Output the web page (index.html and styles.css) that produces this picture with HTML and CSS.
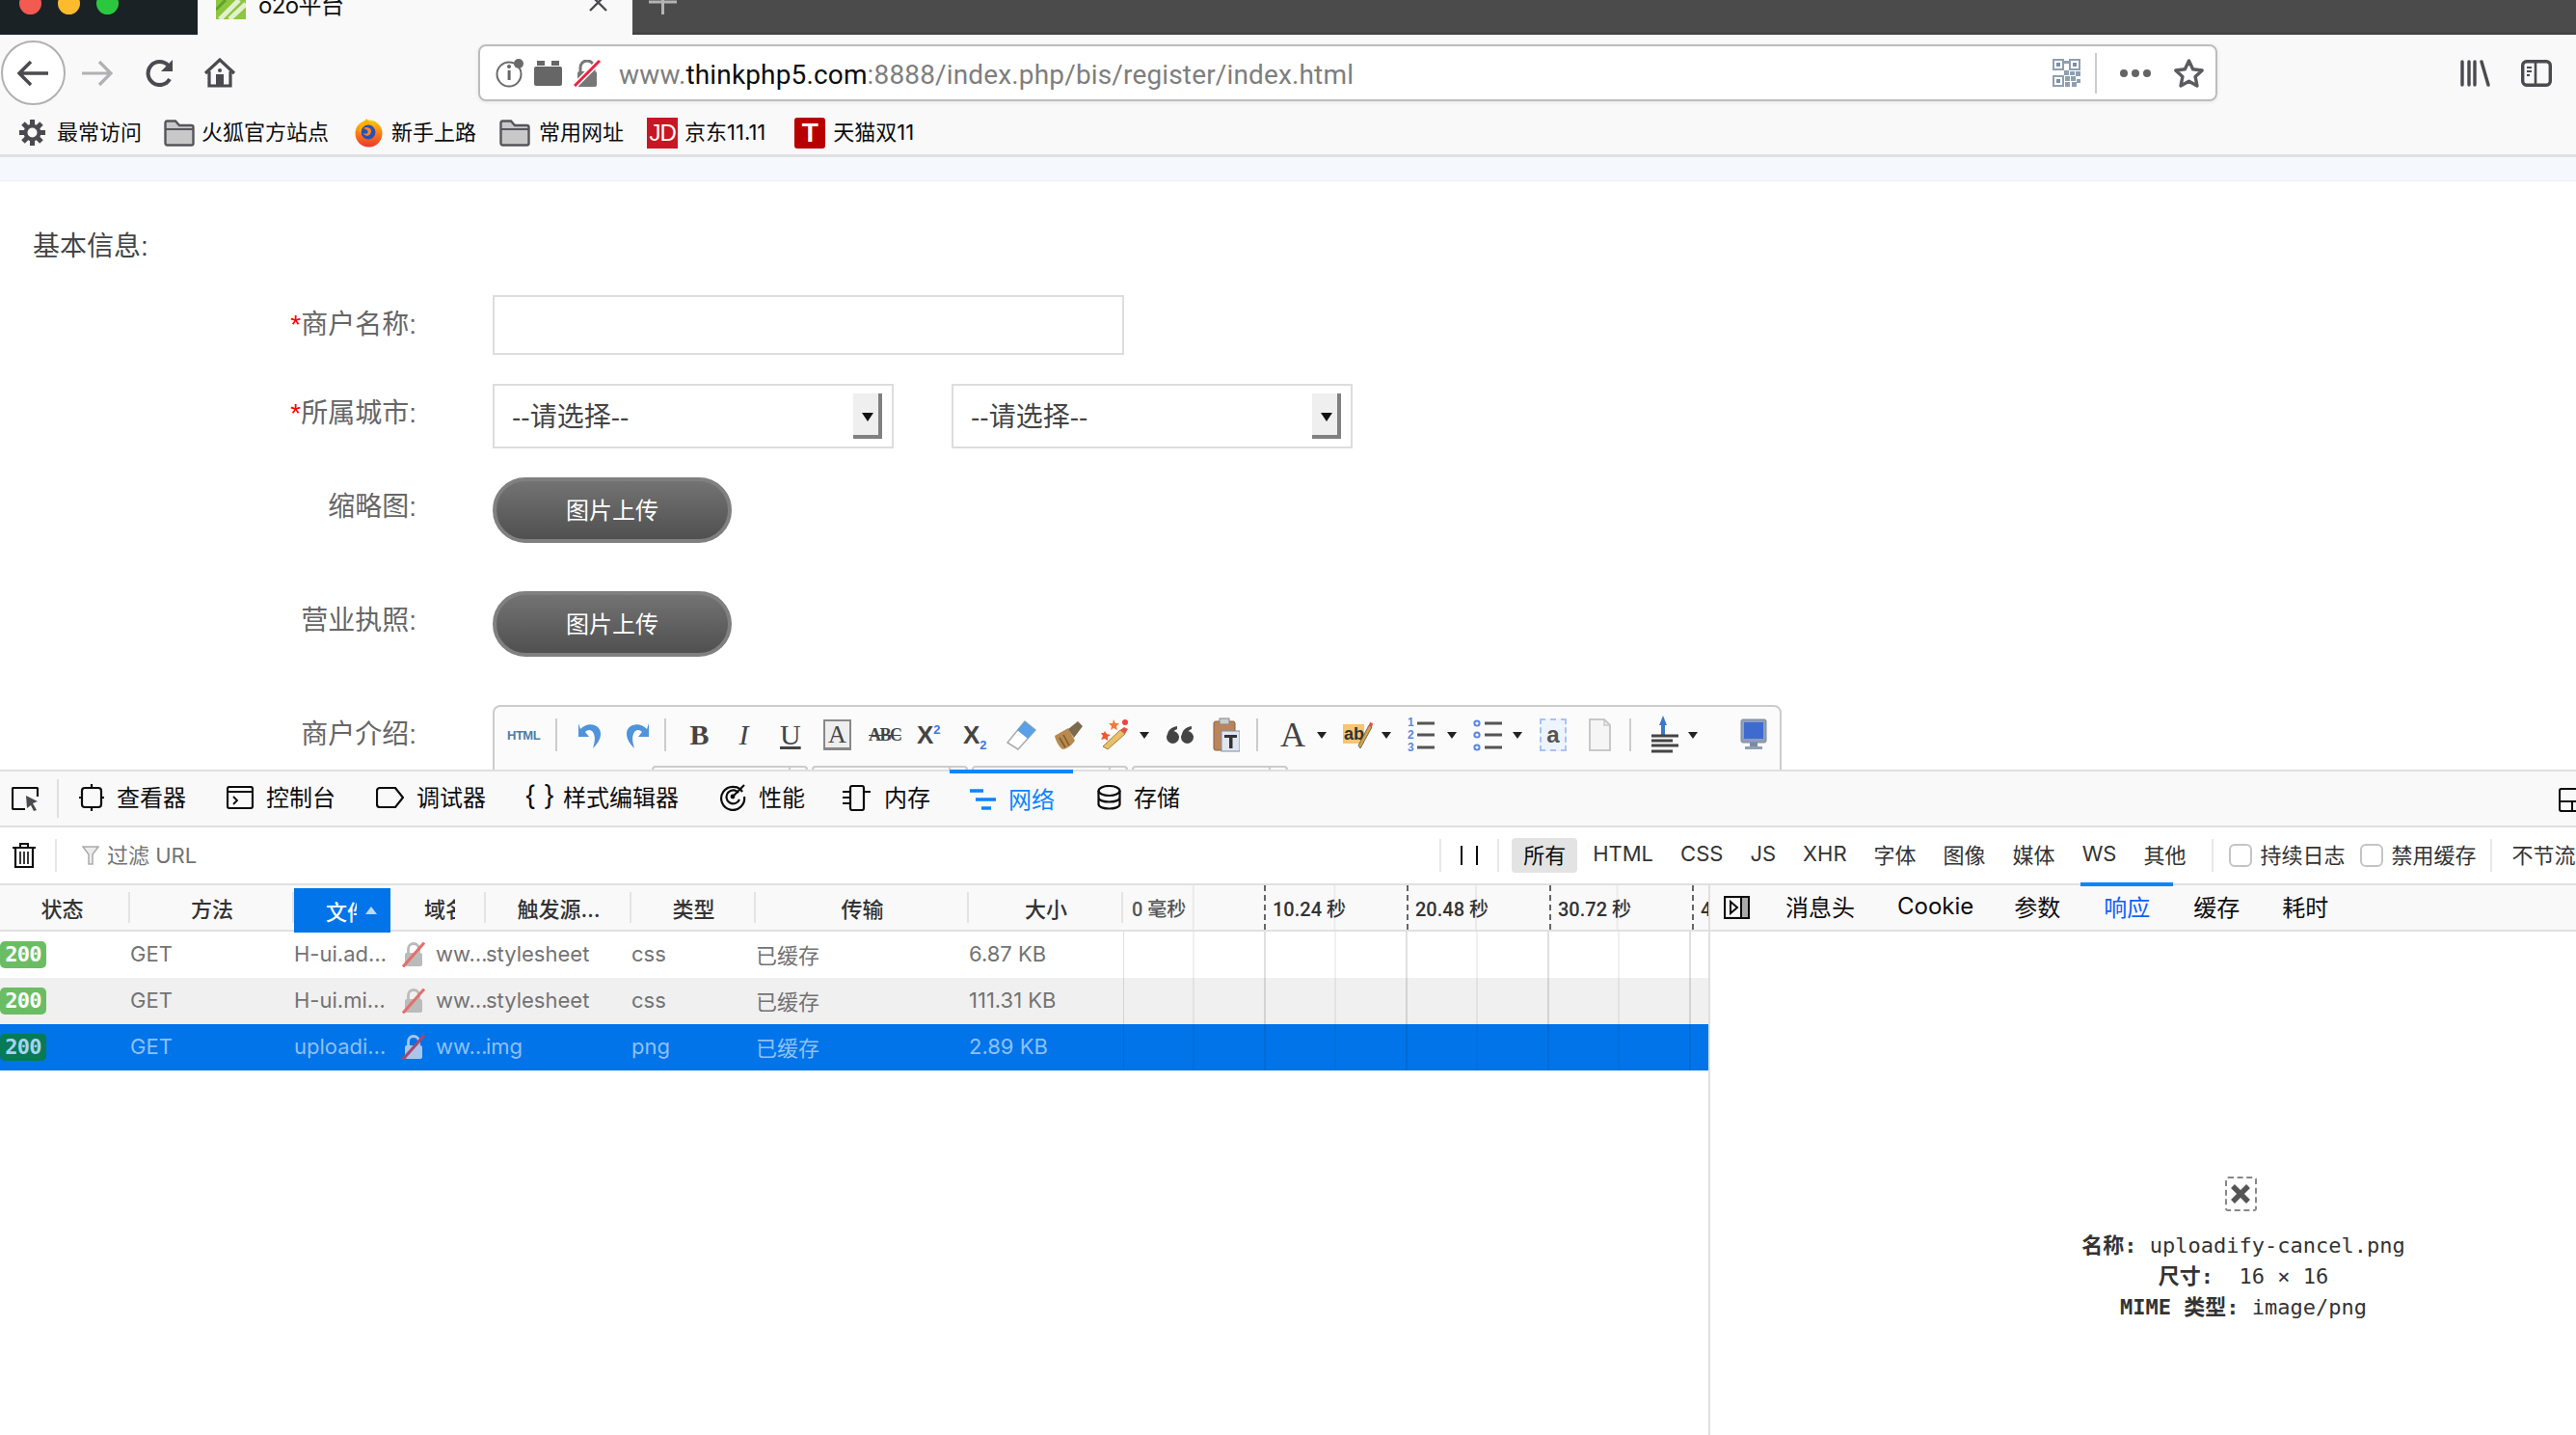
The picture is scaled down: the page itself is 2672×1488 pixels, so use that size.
FILE: index.html
```html
<!DOCTYPE html>
<html lang="zh-CN">
<head>
<meta charset="utf-8">
<title>o2o平台</title>
<link rel="stylesheet" href="styles.css">
</head>
<body>
<div class="app">
  <header class="tabbar">
    <div class="traffic">
      <span class="dot red"></span><span class="dot yellow"></span><span class="dot green"></span>
    </div>
    <div class="tab">
      <svg class="favicon" width="31" height="20" viewBox="0 0 31 20"><rect width="31" height="20" fill="#8dc63f"/><path d="M4 20 L24 0 M14 20 L31 4" stroke="#fff" stroke-width="5" opacity=".75"/><path d="M0 10 L10 0" stroke="#5fa32a" stroke-width="3"/></svg>
      <span class="tab-title">o2o平台</span>
      <svg class="tab-close" width="19" height="12" viewBox="0 0 19 12"><path d="M1 -6 L18 11 M18 -6 L1 11" stroke="#4a4a4f" stroke-width="2.4" fill="none"/></svg>
    </div>
    <svg class="tab-new" width="29" height="16" viewBox="0 0 29 16"><path d="M14.5 0 V15 M0 2 H29" stroke="#b4b4b4" stroke-width="3" fill="none"/></svg>
  </header>

  <nav class="navbar">
    <button class="back">
      <svg width="33" height="28" viewBox="0 0 33 28"><path d="M14 2 L2 14 L14 26 M2 14 H32" stroke="#4a4a4f" stroke-width="3.4" fill="none"/></svg>
    </button>
    <svg class="ic-forward" width="33" height="28" viewBox="0 0 33 28"><path d="M19 2 L31 14 L19 26 M31 14 H1" stroke="#b1b1b3" stroke-width="3.2" fill="none"/></svg>
    <svg class="ic-reload" width="31" height="28" viewBox="0 0 31 28"><path d="M26 20 A12 12 0 1 1 24.5 6" stroke="#4a4a4f" stroke-width="4" fill="none"/><path d="M29 0 V12 H17 Z" fill="#4a4a4f"/></svg>
    <svg class="ic-home" width="34" height="31" viewBox="0 0 34 31"><path d="M2 16 L17 2 L32 16" stroke="#4a4a4f" stroke-width="3.2" fill="none"/><path d="M6 14 V29 H28 V14" stroke="#4a4a4f" stroke-width="3.2" fill="none"/><rect x="13" y="17" width="8" height="12" fill="#4a4a4f"/><circle cx="17" cy="13" r="2" fill="#4a4a4f"/></svg>
    <div class="urlbar">
      <svg class="ic-info" width="30" height="30" viewBox="0 0 30 30"><circle cx="14" cy="16" r="12.5" stroke="#6a6a6a" stroke-width="2" fill="#fff"/><rect x="12.6" y="12" width="3" height="10" fill="#666"/><circle cx="14" cy="8" r="2" fill="#666"/><circle cx="24" cy="5" r="5" fill="#6a6a6a"/></svg>
      <svg class="ic-box" width="29" height="26" viewBox="0 0 29 26"><rect y="6" width="29" height="20" rx="2" fill="#666"/><rect x="3" y="0" width="8" height="5" fill="#666"/><rect x="18" y="0" width="8" height="5" fill="#666"/></svg>
      <svg class="ic-lock" width="28" height="28" viewBox="0 0 28 28"><path d="M7 12 V8 A7 7 0 0 1 21 8 V12" stroke="#777" stroke-width="3" fill="none"/><rect x="4" y="12" width="20" height="16" rx="2" fill="#777"/><path d="M1 27 L27 1" stroke="#fff" stroke-width="6"/><path d="M1 27 L27 1" stroke="#f0213f" stroke-width="3"/></svg>
      <div class="url"><span class="url-dim">www.</span><span class="url-host">thinkphp5.com</span><span class="url-dim">:8888/index.php/bis/register/index.html</span></div>
      <svg class="ic-qr" width="29" height="29" viewBox="0 0 29 29">
        <g fill="#8f9fb0"><rect width="12" height="12"/><rect x="17" width="12" height="12"/><rect y="17" width="12" height="12"/><rect x="12" y="2" width="5" height="3"/><rect x="12" y="12" width="5" height="5"/><rect x="18" y="13" width="5" height="4"/><rect x="24" y="13" width="5" height="5"/><rect x="13" y="18" width="5" height="5"/><rect x="19" y="18" width="5" height="5"/><rect x="25" y="21" width="4" height="4"/><rect x="13" y="24" width="5" height="5"/><rect x="20" y="24" width="5" height="5"/></g>
        <g fill="#fff"><rect x="2" y="2" width="8" height="8"/><rect x="19" y="2" width="8" height="8"/><rect x="2" y="19" width="8" height="8"/></g>
        <g fill="#7f8fa0"><rect x="4" y="4" width="4" height="4"/><rect x="21" y="4" width="4" height="4"/><rect x="4" y="21" width="4" height="4"/></g>
      </svg>
      <span class="url-sep"></span>
      <svg class="ic-dots" width="32" height="8" viewBox="0 0 32 8"><g fill="#636366"><circle cx="4" cy="4" r="4"/><circle cx="16" cy="4" r="4"/><circle cx="28" cy="4" r="4"/></g></svg>
      <svg class="ic-star" width="33" height="32" viewBox="0 0 33 32"><path d="M16.5 3 L20.6 11.8 L30.2 13 L23.1 19.6 L25 29 L16.5 24.3 L8 29 L9.9 19.6 L2.8 13 L12.4 11.8 Z" stroke="#5c5c5f" stroke-width="3.4" stroke-linejoin="round" fill="none"/></svg>
    </div>
    <svg class="ic-library" width="31" height="28" viewBox="0 0 31 28"><g stroke="#4a4a4f" stroke-width="3.4" stroke-linecap="round"><path d="M2 2 V26 M9 2 V26 M15 2 V26 M22 2 L29 26"/></g></svg>
    <svg class="ic-sidebar" width="32" height="28" viewBox="0 0 32 28"><rect x="1.7" y="1.7" width="28.6" height="24.6" rx="4" stroke="#4a4a4f" stroke-width="3.4" fill="none"/><path d="M15 2 V26" stroke="#4a4a4f" stroke-width="2.6"/><path d="M6 8 H11 M6 12 H11 M6 16 H9" stroke="#4a4a4f" stroke-width="2"/></svg>
  </nav>

  <div class="bookmarks">
    <div class="bm bm-gear">
      <svg width="29" height="29" viewBox="0 0 29 29"><g stroke="#4a4a4f" stroke-width="5"><path d="M14.5 1 V28 M1 14.5 H28 M5 5 L24 24 M24 5 L5 24"/></g><circle cx="14.5" cy="14.5" r="9" fill="#4a4a4f"/><circle cx="14.5" cy="14.5" r="5" fill="#f9f9fa"/></svg>
      <span>最常访问</span>
    </div>
    <div class="bm bm-folder1">
      <svg width="32" height="28" viewBox="0 0 32 28"><path d="M1.5 3 A2 2 0 0 1 3.5 1.5 H12 L16 6 H28.5 A2 2 0 0 1 30.5 8 V24.5 A2 2 0 0 1 28.5 26.5 H3.5 A2 2 0 0 1 1.5 24.5 Z" fill="#c8c8c8" stroke="#56565a" stroke-width="2.4"/><path d="M2 10 H30" stroke="#56565a" stroke-width="2"/></svg>
      <span>火狐官方站点</span>
    </div>
    <div class="bm bm-fx">
      <svg width="29" height="30" viewBox="0 0 29 30"><defs><linearGradient id="fx" x1="0" y1="0" x2="0" y2="1"><stop offset="0" stop-color="#ffcb00"/><stop offset=".5" stop-color="#ff7a18"/><stop offset="1" stop-color="#e8372c"/></linearGradient></defs><circle cx="14.5" cy="15.5" r="14" fill="url(#fx)"/><path d="M12 0 C17 5 14 7 21 9 L17 16 L9 20 L4 12 Z" fill="#ffb000"/><circle cx="14" cy="14" r="7.5" fill="#2b4fb8"/><path d="M9 10 C15 7 19 12 16 16 C14 19 10 18 9 15 C12 17 15 15 13 12 Z" fill="#ff8a1c"/></svg>
      <span>新手上路</span>
    </div>
    <div class="bm bm-folder2">
      <svg width="32" height="28" viewBox="0 0 32 28"><path d="M1.5 3 A2 2 0 0 1 3.5 1.5 H12 L16 6 H28.5 A2 2 0 0 1 30.5 8 V24.5 A2 2 0 0 1 28.5 26.5 H3.5 A2 2 0 0 1 1.5 24.5 Z" fill="#c8c8c8" stroke="#56565a" stroke-width="2.4"/><path d="M2 10 H30" stroke="#56565a" stroke-width="2"/></svg>
      <span>常用网址</span>
    </div>
    <div class="bm bm-jd"><b class="logo-jd">JD</b><span>京东11.11</span></div>
    <div class="bm bm-t"><b class="logo-t">T</b><span>天猫双11</span></div>
  </div>

  <div class="strip"></div>

  <main class="page">
    <h3 class="section-title">基本信息:</h3>
    <div class="row row-name">
      <label class="lbl"><em>*</em>商户名称:</label>
      <input class="text-input" type="text">
    </div>
    <div class="row row-city">
      <label class="lbl"><em>*</em>所属城市:</label>
      <div class="selects">
        <div class="sel"><span class="sel-text">--请选择--</span><span class="sel-btn"></span></div>
        <div class="sel sel-2"><span class="sel-text">--请选择--</span><span class="sel-btn"></span></div>
      </div>
    </div>
    <div class="row row-thumb">
      <label class="lbl">缩略图:</label>
      <button class="upload">图片上传</button>
    </div>
    <div class="row row-license">
      <label class="lbl">营业执照:</label>
      <button class="upload">图片上传</button>
    </div>
    <div class="row row-intro">
      <label class="lbl">商户介绍:</label>
      <div class="editor">
        <div class="ed-tools">
          <span class="t-html">HTML</span>
          <span class="ed-sep s1"></span>
          <svg class="t-undo" width="26" height="30" viewBox="0 0 26 30"><path d="M3 9 C10 1 24 3 24 14 C24 20 20 25 16 29 C18 22 19 17 16 12 C13 9 10 10 8 12 L12 17 H1 V3 Z" fill="#4f93d8"/></svg>
          <svg class="t-redo" width="26" height="30" viewBox="0 0 26 30"><path d="M23 9 C16 1 2 3 2 14 C2 20 6 25 10 29 C8 22 7 17 10 12 C13 9 16 10 18 12 L14 17 H25 V3 Z" fill="#4f93d8"/></svg>
          <span class="ed-sep s2"></span>
          <span class="t-b">B</span>
          <span class="t-i">I</span>
          <span class="t-u">U</span>
          <span class="t-a">A</span>
          <span class="t-abc">ABC</span>
          <span class="t-sup">X<sup>2</sup></span>
          <span class="t-sub">X<sub>2</sub></span>
          <svg class="t-eraser" width="33" height="32" viewBox="0 0 33 32"><path d="M21 2 L32 11 L14 31 L3 24 Z" fill="#fff" stroke="#aaa" stroke-width="1.5"/><path d="M21 2 L32 11 L24 20 L13 11 Z" fill="#5aa0e6"/></svg>
          <svg class="t-brush" width="31" height="32" viewBox="0 0 31 32"><path d="M1 17 L15 9 L22 22 C18 28 12 31 9 31 C5 28 2 22 1 17 Z" fill="#b98a4f"/><path d="M6 19 L12 29 M10 16 L16 27" stroke="#7e5a2c" stroke-width="1.5"/><path d="M15 10 L25 2 L30 7 L21 19 Z" fill="#7a6a4e"/></svg>
          <svg class="t-wand" width="32" height="32" viewBox="0 0 32 32"><path d="M9 31 L4 28 L22 11 L27 15 Z" fill="#e8c06a" stroke="#a67c32" stroke-width="1"/><path d="M22 11 L27 15 L30 10 L26 8 Z" fill="#e25544"/><path d="M15 0 L17 4 L21 4 L18 7 L19 11 L15 9 L12 11 L13 7 L10 4 L14 4 Z" fill="#f07c3a"/><path d="M6 12 L8 15 L12 16 L9 18 L9 22 L6 20 L2 21 L4 17 L2 14 L5 14 Z" fill="#ed5a2e"/><circle cx="27" cy="3" r="3" fill="#e44"/></svg>
          <span class="caret c-wand"></span>
          <svg class="t-quote" width="28" height="18" viewBox="0 0 28 18"><g fill="#444"><circle cx="6.5" cy="11.5" r="6.5"/><path d="M1 10 C1 4 5 1 11 0 L11 3 C8 4 6 6 6 9 Z"/><circle cx="21.5" cy="11.5" r="6.5"/><path d="M16 10 C16 4 20 1 26 0 L26 3 C23 4 21 6 21 9 Z"/></g></svg>
          <svg class="t-paste" width="28" height="36" viewBox="0 0 28 36"><rect x="1" y="4" width="22" height="30" rx="2" fill="#b9865c" stroke="#8a6038"/><rect x="7" y="1" width="10" height="6" fill="#ccc" stroke="#888"/><rect x="9" y="14" width="19" height="21" fill="#dfe6f2" stroke="#7e8ca8"/><path d="M12 18 H25 V21 H20.5 V32 H17 V21 H12 Z" fill="#333"/></svg>
          <span class="ed-sep s3"></span>
          <span class="t-color">A</span>
          <span class="caret c-color"></span>
          <svg class="t-hl" width="31" height="32" viewBox="0 0 31 32"><rect y="5" width="22" height="20" fill="#f6c56f"/><text x="1" y="21" class="svg-ab">ab</text><path d="M18 30 L16 27 L27 6 L30 8 Z" fill="#d9a441" stroke="#555" stroke-width=".8"/><path d="M27 6 L30 8 L31 4 L28 3 Z" fill="#e44"/></svg>
          <span class="caret c-hl"></span>
          <svg class="t-ol" width="28" height="36" viewBox="0 0 28 36"><text x="0" y="9" class="svg-num">1</text><text x="0" y="22" class="svg-num">2</text><text x="0" y="35" class="svg-num">3</text><path d="M10 6 H28 M10 18 H28 M10 31 H28" stroke="#555" stroke-width="3"/></svg>
          <span class="caret c-ol"></span>
          <svg class="t-ul" width="30" height="36" viewBox="0 0 30 36"><g fill="#fff" stroke="#5a86e0" stroke-width="2"><circle cx="4" cy="6" r="2.6"/><circle cx="4" cy="18" r="2.6"/><circle cx="4" cy="31" r="2.6"/></g><path d="M12 6 H30 M12 18 H30 M12 31 H30" stroke="#555" stroke-width="3"/></svg>
          <span class="caret c-ul"></span>
          <span class="t-anchor">a</span>
          <svg class="t-file" width="23" height="34" viewBox="0 0 23 34"><path d="M1 1 H16 L22 7 V33 H1 Z" fill="#f5f5f5" stroke="#c8c8c8" stroke-width="2"/><path d="M16 1 V7 H22" fill="none" stroke="#c8c8c8" stroke-width="1.5"/></svg>
          <span class="ed-sep s4"></span>
          <svg class="t-align" width="28" height="40" viewBox="0 0 28 40"><path d="M12 0 L16 10 H14 V20 H10 V10 H8 Z" fill="#3d78c8"/><path d="M0 21 H28 M0 26 H22 M0 31 H28 M0 37 H22" stroke="#444" stroke-width="3"/></svg>
          <span class="caret c-align"></span>
          <svg class="t-screen" width="28" height="34" viewBox="0 0 28 34"><rect x="1" y="1" width="26" height="24" rx="2" fill="#8da0b8" stroke="#7a8aa0"/><rect x="4" y="4" width="20" height="17" fill="#3f6bd0"/><rect x="10" y="25" width="8" height="4" fill="#7a8aa0"/><rect x="5" y="29" width="18" height="3" fill="#8da0b8"/></svg>
        </div>
        <div class="ed-selects"><span></span><span></span><span></span><span></span></div>
      </div>
    </div>
  </main>

  <section class="devtools">
    <div class="dt-toolbar">
      <svg class="pick" width="28" height="25" viewBox="0 0 28 25"><path d="M14 23 H2 A1 1 0 0 1 1 22 V2 A1 1 0 0 1 2 1 H26 A1 1 0 0 1 27 2 V10" stroke="#0c0c0d" stroke-width="2.2" fill="none"/><path d="M15 9 L27 15 L22 17 L26 24 L23 25 L20 19 L16 22 Z" fill="#4a4a4f"/></svg>
      <span class="dt-sep"></span>
      <div class="dt-tab"><svg width="26" height="28" viewBox="0 0 26 28"><rect x="3" y="4" width="20" height="20" rx="3" stroke="#0c0c0d" stroke-width="2.2" fill="none"/><path d="M13 0 V4 M13 24 V28 M0 14 H3 M23 14 H26" stroke="#0c0c0d" stroke-width="2.2"/></svg><span>查看器</span></div>
      <div class="dt-tab"><svg width="28" height="24" viewBox="0 0 28 24"><rect x="1" y="1" width="26" height="22" rx="2" stroke="#0c0c0d" stroke-width="2.2" fill="none"/><path d="M1 6 H27" stroke="#0c0c0d" stroke-width="2"/><path d="M7 11 L11 15 L7 19" stroke="#0c0c0d" stroke-width="1.8" fill="none"/></svg><span>控制台</span></div>
      <div class="dt-tab"><svg width="29" height="22" viewBox="0 0 29 22"><path d="M4 1 H20 L28 11 L20 21 H4 A3 3 0 0 1 1 18 V4 A3 3 0 0 1 4 1 Z" stroke="#0c0c0d" stroke-width="2.2" fill="none"/></svg><span>调试器</span></div>
      <div class="dt-tab dt-style"><span class="braces">{ }</span><span>样式编辑器</span></div>
      <div class="dt-tab dt-perf"><svg width="28" height="30" viewBox="0 0 28 30"><path d="M24 9 A12 12 0 1 0 26 14" stroke="#0c0c0d" stroke-width="2.2" fill="none"/><path d="M20 10 A7 7 0 1 0 21 17" stroke="#0c0c0d" stroke-width="2.2" fill="none"/><circle cx="14" cy="14" r="2.4" fill="#0c0c0d"/><path d="M14 14 L26 2" stroke="#0c0c0d" stroke-width="2.2"/></svg><span>性能</span></div>
      <div class="dt-tab dt-mem"><svg width="31" height="27" viewBox="0 0 31 27"><rect x="9" y="1" width="14" height="25" rx="2" stroke="#0c0c0d" stroke-width="2.2" fill="none"/><path d="M1 7 H9 M1 13 H9 M1 19 H9 M23 7 H30" stroke="#0c0c0d" stroke-width="2"/></svg><span>内存</span></div>
      <div class="dt-tab active"><svg width="27" height="22" viewBox="0 0 27 22"><path d="M0 2 H14 M6 11 H27 M12 20 H22" stroke="#0a84ff" stroke-width="3.4"/></svg><span>网络</span></div>
      <div class="dt-tab dt-store"><svg width="25" height="26" viewBox="0 0 25 26"><ellipse cx="12.5" cy="6" rx="11" ry="5" stroke="#0c0c0d" stroke-width="2.2" fill="none"/><path d="M1.5 6 V20 C1.5 26 23.5 26 23.5 20 V6 M1.5 13 C1.5 19 23.5 19 23.5 13" stroke="#0c0c0d" stroke-width="2.2" fill="none"/></svg><span>存储</span></div>
      <svg class="dock" width="34" height="25" viewBox="0 0 34 25"><rect x="1" y="1" width="32" height="23" rx="2" stroke="#0c0c0d" stroke-width="2.2" fill="none"/><path d="M1 14 H34 M14 14 V24" stroke="#0c0c0d" stroke-width="2"/></svg>
    </div>

    <div class="dt-filter">
      <svg class="trash" width="24" height="26" viewBox="0 0 24 26"><path d="M0 5 H24 M8 4 V1 H16 V4" stroke="#0c0c0d" stroke-width="2" fill="none"/><path d="M3 6 V25 H21 V6" stroke="#0c0c0d" stroke-width="2.2" fill="none"/><path d="M8 9 V22 M12 9 V22 M16 9 V22" stroke="#0c0c0d" stroke-width="1.6"/></svg>
      <span class="f-sep f-sep-a"></span>
      <svg class="funnel" width="18" height="20" viewBox="0 0 18 20"><path d="M1 1 H17 L11 9 V19 H7 V9 Z" fill="#ececec" stroke="#aaa" stroke-width="1.5"/></svg>
      <span class="f-url">过滤 URL</span>
      <span class="f-sep f-sep-b"></span>
      <svg class="pause" width="18" height="20" viewBox="0 0 18 20"><path d="M1 0 V20 M17 0 V20" stroke="#0c0c0d" stroke-width="2"/></svg>
      <span class="f-sep f-sep-c"></span>
      <button class="pill on">所有</button>
      <button class="pill">HTML</button>
      <button class="pill">CSS</button>
      <button class="pill">JS</button>
      <button class="pill">XHR</button>
      <button class="pill">字体</button>
      <button class="pill">图像</button>
      <button class="pill">媒体</button>
      <button class="pill">WS</button>
      <button class="pill">其他</button>
      <span class="f-sep f-sep-d"></span>
      <span class="check"></span><span class="chk-label">持续日志</span>
      <span class="check check-2"></span><span class="chk-label">禁用缓存</span>
      <span class="f-sep f-sep-e"></span>
      <span class="throttle">不节流</span>
    </div>

    <div class="net">
      <div class="net-table">
        <div class="grid head">
          <div class="th th-status"><span>状态</span></div>
          <div class="th"><span>方法</span></div>
          <div class="th th-file"><span class="clip">文件</span><i class="sort"></i></div>
          <div class="th th-domain"><span class="clip">域名</span></div>
          <div class="th"><span>触发源…</span></div>
          <div class="th"><span>类型</span></div>
          <div class="th"><span>传输</span></div>
          <div class="th"><span>大小</span></div>
          <div class="th-wf">
            <span class="wf-0">0 毫秒</span><span class="wf-t">10.24 秒</span><span class="wf-t">20.48 秒</span><span class="wf-t">30.72 秒</span><span class="wf-t">40.96 秒</span>
          </div>
        </div>
        <div class="grid tr">
          <div class="td"><span class="badge">200</span></div>
          <div class="td">GET</div>
          <div class="td">H-ui.ad…</div>
          <div class="td td-dom"><svg class="nolock" width="24" height="26" viewBox="0 0 24 26"><use href="#nolock"/></svg><span>ww…</span></div>
          <div class="td">stylesheet</div>
          <div class="td">css</div>
          <div class="td">已缓存</div>
          <div class="td">6.87 KB</div>
          <div class="wf"></div>
        </div>
        <div class="grid tr odd">
          <div class="td"><span class="badge">200</span></div>
          <div class="td">GET</div>
          <div class="td">H-ui.mi…</div>
          <div class="td td-dom"><svg class="nolock" width="24" height="26" viewBox="0 0 24 26"><use href="#nolock"/></svg><span>ww…</span></div>
          <div class="td">stylesheet</div>
          <div class="td">css</div>
          <div class="td">已缓存</div>
          <div class="td">111.31 KB</div>
          <div class="wf"></div>
        </div>
        <div class="grid tr sel-row">
          <div class="td"><span class="badge">200</span></div>
          <div class="td">GET</div>
          <div class="td">uploadi…</div>
          <div class="td td-dom"><svg class="nolock" width="24" height="26" viewBox="0 0 24 26"><use href="#nolock"/></svg><span>ww…</span></div>
          <div class="td">img</div>
          <div class="td">png</div>
          <div class="td">已缓存</div>
          <div class="td">2.89 KB</div>
          <div class="wf"></div>
        </div>
      </div>
      <aside class="side">
        <div class="side-tabs">
          <svg class="side-toggle" width="27" height="24" viewBox="0 0 27 24"><rect x="1" y="1" width="25" height="22" stroke="#0c0c0d" stroke-width="2.2" fill="none"/><rect x="18" y="1" width="8" height="22" fill="#aaa" stroke="#0c0c0d" stroke-width="2"/><path d="M7 6 L14 12 L7 18 Z" fill="none" stroke="#0c0c0d" stroke-width="2"/></svg>
          <span class="s-tab s1t">消息头</span>
          <span class="s-tab s2t">Cookie</span>
          <span class="s-tab s3t">参数</span>
          <span class="s-tab s4t active">响应</span>
          <span class="s-tab s5t">缓存</span>
          <span class="s-tab s6t">耗时</span>
        </div>
        <div class="preview">
          <div class="preview-img">
            <svg width="22" height="22" viewBox="0 0 22 22"><path d="M3 3 L19 19 M19 3 L3 19" stroke="#555" stroke-width="5.5"/></svg>
          </div>
          <div class="preview-line"><b>名称:</b> uploadify-cancel.png</div>
          <div class="preview-line"><b>尺寸:</b>&nbsp; 16 × 16</div>
          <div class="preview-line"><b>MIME 类型:</b> image/png</div>
        </div>
      </aside>
    </div>
  </section>
</div>
<svg class="defs" width="0" height="0"><defs><g id="nolock"><path d="M6.5 11 V7 A5.5 5.5 0 0 1 17.5 7 V11" stroke="currentColor" stroke-width="2.8" fill="none"/><rect x="3" y="11" width="18" height="14" rx="2" fill="currentColor"/><path d="M1 25.5 L23 .5" stroke="var(--slash)" stroke-width="3"/></g></defs></svg>
</body>
</html>
```

FILE: styles.css
```css
* { box-sizing: border-box; }
html, body { margin: 0; padding: 0; height: 100%; overflow: hidden; background: #fff; }
body { font-family: "Inter", "Noto Sans CJK SC", sans-serif; color: #0c0c0d; }
button { font-family: inherit; }
.app { width: 2672px; height: 1488px; display: flex; flex-direction: column; overflow: hidden; }
.defs { position: absolute; }

/* tab strip */
.tabbar { height: 36px; flex: none; display: flex; align-items: flex-start; background: linear-gradient(#4b4b4b 90%, #3c3c3c); overflow: hidden; }
.traffic { width: 205px; height: 36px; background: #1b2226; display: flex; padding-left: 20px; gap: 17px; flex: none; }
.dot { width: 23px; height: 23px; border-radius: 50%; margin-top: -8px; flex: none; }
.red { background: #f25a52; } .yellow { background: #fcbb2d; } .green { background: #2bc83f; }
.tab { width: 451px; height: 36px; background: #f9f9fa; display: flex; align-items: flex-start; padding-left: 19px; flex: none; }
.tab-title { font-size: 24px; line-height: 30px; margin: -9px 0 0 13px; color: #111; letter-spacing: -.6px; }
.tab-close { margin-left: auto; margin-right: 26px; }
.tab-new { margin-left: 17px; }

/* nav */
.navbar { height: 79px; flex: none; background: #f9f9fa; display: flex; align-items: center; padding-left: 1px; }
.back { width: 67px; height: 67px; border-radius: 50%; border: 2px solid #b1b1b3; background: #fff; padding: 0; display: flex; align-items: center; justify-content: center; flex: none; }
.ic-forward { margin-left: 16px; flex: none; }
.ic-reload { margin-left: 33px; flex: none; }
.ic-home { margin-left: 30px; flex: none; }
.urlbar { margin-left: 251px; width: 1804px; height: 59px; flex: none; background: #fff; border: 2px solid #bdbdbd; border-radius: 8px; display: flex; align-items: center; padding-left: 16px; padding-right: 11px; box-shadow: 0 1px 4px rgba(0,0,0,.08); }
.ic-box { margin-left: 10px; }
.ic-lock { margin-left: 12px; }
.url { margin: 3px 0 0 19px; font-family: "Roboto", "Noto Sans CJK SC", sans-serif; font-size: 28px; letter-spacing: .15px; color: #7e7e7e; white-space: nowrap; }
.url-host { color: #0c0c0d; }
.ic-qr { margin-left: auto; }
.url-sep { width: 2px; height: 42px; background: #ccc; margin-left: 15px; }
.ic-dots { margin-left: 24px; }
.ic-star { margin-left: 23px; }
.ic-library { margin-left: 252px; flex: none; }
.ic-sidebar { margin-left: 32px; flex: none; }

/* bookmarks */
.bookmarks { height: 45px; flex: none; background: #f9f9fa; display: flex; align-items: center; padding-left: 19px; font-size: 22px; }
.bm { display: flex; align-items: center; white-space: nowrap; }
.bm > span { padding-bottom: 6px; }
.bm-gear span { margin-left: 11px; }
.bm-folder1 { margin-left: 23px; } .bm-folder1 span { margin-left: 7px; }
.bm-fx { margin-left: 27px; } .bm-fx span { margin-left: 9px; }
.bm-folder2 { margin-left: 24px; } .bm-folder2 span { margin-left: 9px; }
.bm-jd { margin-left: 24px; } .bm-jd span { margin-left: 7px; }
.bm-t { margin-left: 30px; } .bm-t span { margin-left: 8px; }
.logo-jd { width: 32px; height: 32px; background: #c91623; color: #fff; font: 400 24px/32px "Liberation Sans", sans-serif; text-align: center; letter-spacing: -1px; }
.logo-t { width: 32px; height: 32px; background: #b80000; color: #fff; font: bold 28px/32px "Liberation Sans", sans-serif; text-align: center; border-radius: 3px; }

.strip { height: 28px; flex: none; background: #f5f9fd; border-top: 3px solid #e0e0e2; border-bottom: 1px solid #edf0f3; }

/* page */
.page { height: 610px; flex: none; overflow: hidden; background: #fff; color: #555; padding-top: 52px; font-family: "Liberation Sans", "Noto Sans CJK SC", sans-serif; }
.section-title { margin: 0 0 34px 34px; font-weight: 400; font-size: 28px; line-height: 32px; color: #444; }
.row { display: grid; grid-template-columns: 432px auto; column-gap: 79px; justify-items: start; align-items: start; }
.lbl { justify-self: end; font-size: 28px; line-height: 32px; padding-top: 15px; color: #666; white-space: nowrap; }
.lbl em { color: #f00; font-style: normal; }
.row-city, .row-thumb { margin-top: 30px; }
.row-license, .row-intro { margin-top: 50px; }
.text-input { width: 655px; height: 62px; border: 2px solid #ddd; background: #fff; outline: none; }
.selects { display: flex; gap: 60px; }
.sel { width: 416px; height: 67px; border: 2px solid #ddd; background: #fff; display: flex; align-items: center; justify-content: space-between; padding: 0 10px 0 18px; font-size: 28px; color: #444; }
.sel-text { padding-bottom: 3px; }
.sel-btn { width: 30px; height: 47px; background: #efefef; border-right: 4px solid #808080; border-bottom: 4px solid #808080; position: relative; }
.sel-btn::after { content: ""; position: absolute; left: 9px; top: 20px; border: 6px solid transparent; border-top: 9px solid #111; border-bottom: 0; }
.upload { width: 248px; height: 68px; border-radius: 34px; border: 4px solid #808080; background: linear-gradient(#737373, #505050); color: #fff; font-size: 24px; padding: 0 0 3px; }

/* editor */
.editor { width: 1337px; height: 120px; border: 2px solid #ccc; border-radius: 8px 8px 0 0; background: #fbfbfb; }
.ed-tools { height: 58px; display: flex; align-items: center; position: relative; }
.ed-tools > * { flex: none; }
.ed-sep { width: 2px; height: 34px; background: #ccc; }
.t-html { margin-left: 13px; width: 36px; font: bold 13px "Liberation Sans", sans-serif; color: #4d7ea8; letter-spacing: -.5px; }
.s1 { margin-left: 14px; }
.t-undo { margin-left: 21px; } .t-redo { margin-left: 23px; }
.s2 { margin-left: 15px; }
.t-b, .t-i, .t-u, .t-a, .t-abc, .t-color { font-family: "Liberation Serif", serif; color: #444; text-align: center; }
.t-b { margin-left: 24px; width: 21px; font-size: 30px; font-weight: bold; }
.t-i { margin-left: 29px; width: 13px; font-size: 30px; font-style: italic; }
.t-u { margin-left: 31px; width: 21px; font-size: 30px; text-decoration: underline; }
.t-a { margin-left: 24px; width: 29px; height: 32px; line-height: 27px; font-size: 26px; border: 2px solid #888; border-bottom-width: 3px; background: #eee; }
.t-abc { margin-left: 18px; width: 31px; font-size: 18px; font-weight: bold; text-decoration: line-through; white-space: nowrap; letter-spacing: -1.5px; }
.t-sup, .t-sub { font: bold 26px/1 "Liberation Sans", sans-serif; color: #444; width: 29px; white-space: nowrap; }
.t-sup { margin-left: 19px; } .t-sub { margin-left: 19px; }
.t-sup sup, .t-sub sub { font-size: 13px; color: #3d78e0; line-height: 0; }
.t-eraser { margin-left: 14px; } .t-brush { margin-left: 18px; } .t-wand { margin-left: 16px; }
.caret { width: 0; height: 0; border: 5px solid transparent; border-top: 7px solid #222; border-bottom: 0; }
.c-wand { margin-left: 10px; }
.t-quote { margin-left: 18px; }
.t-paste { margin-left: 20px; }
.s3 { margin-left: 17px; }
.t-color { margin-left: 23px; width: 24px; font-size: 36px; line-height: 36px; }
.c-color { margin-left: 14px; }
.t-hl { margin-left: 17px; }
.svg-ab { font: bold 18px "Liberation Sans", sans-serif; fill: #333; }
.svg-num { font: bold 12px "Liberation Sans", sans-serif; fill: #5a86e0; }
.c-hl { margin-left: 9px; }
.t-ol { margin-left: 17px; } .c-ol { margin-left: 13px; }
.t-ul { margin-left: 17px; } .c-ul { margin-left: 11px; }
.t-anchor { margin-left: 18px; width: 28px; height: 34px; font: bold 24px/30px "Liberation Sans", sans-serif; text-align: center; color: #555; border: 2px dashed #a9c4ef; background: #eef4fd; }
.t-file { margin-left: 23px; }
.s4 { margin-left: 19px; }
.t-align { margin-left: 21px; } .c-align { margin-left: 10px; }
.t-screen { margin-left: 44px; }
.ed-selects { display: flex; gap: 4px; margin-left: 163px; margin-top: 3px; }
.ed-selects span { width: 162px; height: 12px; border: 2px solid #ccc; border-bottom: 0; border-radius: 4px 4px 0 0; background: linear-gradient(90deg, transparent 140px, #ccc 140px, #ccc 142px, transparent 142px); }

/* devtools */
.devtools { flex: 1; min-height: 0; background: #fff; display: flex; flex-direction: column; font-size: 22px; overflow: hidden; }
.dt-toolbar { height: 60px; flex: none; background: #f9f9fa; border-top: 2px solid #e0e0e2; border-bottom: 2px solid #e0e0e2; display: flex; align-items: stretch; position: relative; }
.pick { margin: 16px 0 0 12px; flex: none; }
.dt-sep { width: 2px; height: 40px; margin: 8px 0 0 19px; background: #e0e0e2; flex: none; }
.dt-tab { display: flex; align-items: center; gap: 13px; padding: 0 21px; font-size: 24px; white-space: nowrap; position: relative; margin-top: -2px; }
.dt-tab > span { padding-bottom: 4px; }
.dt-tab.active { color: #0a84ff; border-top: 4px solid #0a84ff; margin-left: -1px; padding-right: 19px; }
.dt-style { margin-left: 19px; padding-left: 0; gap: 13px; }
.dt-mem { margin-left: -4px; }
.dt-store { margin-left: 4px; }
.braces { width: 27px; font-size: 28px; white-space: nowrap; }
.dock { margin: 17px -16px 0 auto; flex: none; }

.dt-filter { height: 60px; flex: none; display: flex; align-items: center; border-bottom: 2px solid #e0e0e2; background: #fff; font-size: 22px; white-space: nowrap; width: 2780px; }
.dt-filter > * { flex: none; }
.trash { margin-left: 13px; }
.f-sep { width: 2px; height: 34px; background: #e8e8e8; }
.f-sep-a { margin-left: 20px; }
.funnel { margin-left: 26px; }
.f-url { margin-left: 8px; color: #737373; padding-bottom: 4px; }
.f-sep-b { margin-left: 1289px; }
.pause { margin-left: 20px; }
.f-sep-c { margin-left: 20px; }
.pill { border: 0; background: none; padding: 0 12px 4px; height: 36px; border-radius: 4px; font-size: 22px; color: #333; margin-right: 4px; }
.pill.on { background: #e3e3e3; color: #0c0c0d; margin-left: 13px; }
.f-sep-d { margin-left: 11px; }
.check { width: 24px; height: 24px; border: 2px solid #c4c4c4; border-radius: 6px; background: #fff; margin-left: 16px; }
.check-2 { margin-left: 16px; }
.chk-label { margin-left: 8px; color: #333; padding-bottom: 4px; }
.f-sep-e { margin-left: 15px; }
.throttle { margin-left: 20px; color: #333; padding-bottom: 4px; }

.net { flex: 1; min-height: 0; display: flex; }
.net-table { width: 1772px; flex: none; }
.grid { display: grid; grid-template-columns: 135px 170px 100px 99px 151px 129px 221px 160px 607px; }
.head { height: 48px; background: #f9f9fa; border-bottom: 2px solid #e0e0e2; align-items: stretch; font-size: 22px; font-weight: 500; color: #333; }
.th { display: flex; align-items: center; justify-content: center; position: relative; white-space: nowrap; }
.th::after { content: ""; position: absolute; right: 0; top: 7px; bottom: 7px; width: 2px; background: #e4e4e4; }
.th-status { padding-right: 6px; }
.th-file { background: #0074e8; color: #fff; margin: 3px 0 -3px; justify-content: flex-start; padding-left: 33px; }
.th-file::after { display: none; }
.clip { display: inline-block; overflow: hidden; width: 32px; white-space: nowrap; }
.sort { width: 0; height: 0; margin-left: 9px; border: 6.5px solid transparent; border-bottom: 8px solid #bcd9f7; border-top: 0; }
.th-domain { justify-content: flex-start; padding-left: 35px; }
.th-wf { display: flex; align-items: center; font-family: "Roboto", "Noto Sans CJK SC", sans-serif; font-size: 20px; color: #333; overflow: hidden; background: linear-gradient(90deg, transparent 72px, #ebebeb 72px, #ebebeb 74px, transparent 74px) 0 0 / 146.6px 100%; white-space: nowrap; }
.wf-0 { width: 146px; padding-left: 9px; flex: none; color: #555; }
.wf-t { width: 148px; height: 100%; flex: none; padding-left: 7px; display: flex; align-items: center; font-weight: 500; border-left: 2px dashed #666; }
.tr { height: 48px; align-items: stretch; color: #737373; font-size: 22px; background: #fff; --slash: #e2706b; }
.tr.odd { background: #f0f0f0; }
.tr.sel-row { background: #0074e8; color: #8fc0f7; --slash: #a9476e; }
.td { display: flex; align-items: center; white-space: nowrap; overflow: hidden; padding-bottom: 3px; }
.td-dom { padding-left: 12px; gap: 11px; }
.nolock { color: #bbb; flex: none; margin-top: 2px; }
.sel-row .nolock { color: #a9c6ea; }
.badge { width: 48px; height: 28px; margin-top: 3px; border-radius: 5px; background: #6bbd63; color: #fff; font: bold 22px/28px "DejaVu Sans Mono", monospace; text-align: center; letter-spacing: -.8px; }
.sel-row .badge { background: #067b55; color: #a7d3ee; }
.wf { margin-bottom: 0; background-image: linear-gradient(90deg, rgba(0,0,0,.12) 2px, transparent 2px), linear-gradient(90deg, rgba(0,0,0,.06) 2px, transparent 2px); background-size: 147px 100%, 147px 100%; background-position: 146px 0, 72px 0; }
.sel-row .wf { background-image: linear-gradient(90deg, rgba(0,0,0,.08) 2px, transparent 2px), linear-gradient(90deg, rgba(0,0,0,.04) 2px, transparent 2px); }

.side { width: 1108px; flex: none; border-left: 2px solid #e0e0e2; display: flex; flex-direction: column; }
.side-tabs { height: 48px; flex: none; background: #f9f9fa; border-bottom: 2px solid #e0e0e2; display: flex; align-items: center; padding-left: 14px; font-size: 24px; position: relative; }
.s-tab { white-space: nowrap; padding-bottom: 3px; }
.side-toggle { margin-right: 37px; flex: none; }
.s2t { margin-left: 44px; } .s3t { margin-left: 42px; } .s4t { margin-left: 45px; } .s5t { margin-left: 45px; } .s6t { margin-left: 44px; }
.s-tab.active { color: #0a60ff; position: relative; }
.s-tab.active::before { content: ""; position: absolute; left: -24px; right: -24px; top: -7px; height: 4px; background: #0a84ff; }
.preview { flex: 1; display: flex; flex-direction: column; align-items: center; padding-top: 254px; font: 22px/32px "DejaVu Sans Mono", "Noto Sans CJK SC", monospace; color: #333; }
.preview-img { width: 33px; height: 36px; border: 2px dashed #888; border-radius: 3px; display: flex; align-items: center; justify-content: center; margin: 0 6px 20px 0; }
.preview-line b { font-weight: 700; }
```
